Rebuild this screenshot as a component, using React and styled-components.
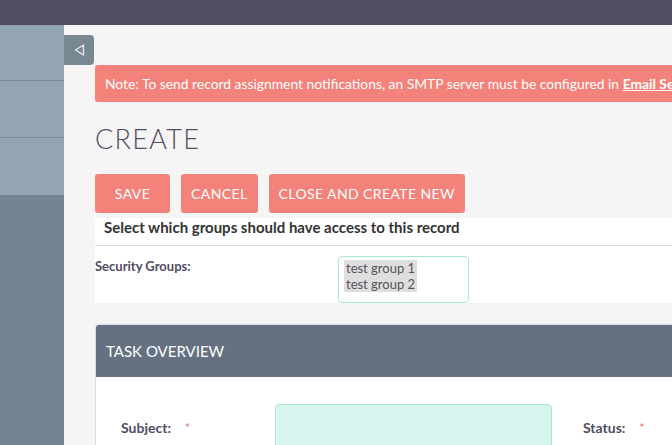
import React from "react";
import styled, { createGlobalStyle } from "styled-components";

const Global = createGlobalStyle`
  html, body { margin: 0; padding: 0; }
  * { box-sizing: border-box; }
  body {
    width: 672px;
    height: 445px;
    overflow: hidden;
    background: #f5f5f5;
    font-family: Lato, "Open Sans", sans-serif;
  }
`;

const TopBar = styled.div`
  height: 25px;
  background: #534d64;
`;

const Layout = styled.div`
  display: flex;
  height: 420px;
`;

const Sidebar = styled.div`
  width: 64px;
  flex-shrink: 0;
  display: flex;
  flex-direction: column;
  background: #748490;
`;

const SideNav = styled.div`
  background: #93a4b2;
  display: flex;
  flex-direction: column;
`;

const SideItem = styled.div`
  height: ${(p) => p.h}px;
  border-bottom: ${(p) => (p.last ? "none" : "1px solid #7a8a97")};
`;

const Main = styled.div`
  position: relative;
  flex: 1;
  overflow: hidden;
  padding: 40px 0 0 31px;
`;

const Toggle = styled.div`
  position: absolute;
  left: 0;
  top: 10px;
  width: 30px;
  height: 30px;
  background: #788893;
  border-radius: 0 4px 4px 0;
  display: flex;
  align-items: center;
  justify-content: center;
`;

const Content = styled.div`
  width: 1000px;
`;

const Banner = styled.div`
  height: 37px;
  background: #f3827a;
  border-radius: 3px;
  color: #fff;
  font-size: 13.85px;
  display: flex;
  align-items: center;
  padding-left: 10px;
  white-space: pre;

  a {
    color: #fff;
    font-weight: 700;
    text-decoration: underline;
  }
`;

const Title = styled.h1`
  margin: 22px 0 0;
  font-size: 27px;
  line-height: 30px;
  font-weight: 300;
  letter-spacing: 1.3px;
  color: #534d64;
`;

const Actions = styled.div`
  display: flex;
  gap: 11px;
  margin-top: 20px;
`;

const Button = styled.button`
  height: 39px;
  min-width: 75px;
  padding: 0 10px;
  border: none;
  border-radius: 3px;
  background: #f3827a;
  color: #fff;
  font-family: Lato, sans-serif;
  font-size: 14px;
  letter-spacing: 0.4px;
  text-transform: uppercase;
`;

const GroupsPanel = styled.div`
  margin-top: 5px;
  width: 577px;
  background: #fff;
`;

const GroupsHeading = styled.div`
  height: 28px;
  border-bottom: 1px solid #dcdcdc;
  padding-left: 9px;
  font-size: 15px;
  font-weight: 700;
  color: #333;
  line-height: 18px;
`;

const GroupsRow = styled.div`
  display: flex;
  padding-top: 10px;
`;

const FieldLabel = styled.div`
  width: 243px;
  font-size: 13px;
  font-weight: 700;
  color: #534d64;
  padding-top: 2px;
`;

const MultiSelect = styled.div`
  width: 131px;
  height: 47px;
  border: 1px solid #a8e5d5;
  border-radius: 4px;
  padding: 3px 0 0 5px;
  display: flex;
  flex-direction: column;
  align-items: flex-start;
`;

const Option = styled.span`
  background: #dedede;
  color: #555;
  font-size: 13px;
  line-height: 16px;
  padding: 0 2px;
`;

const Panel = styled.div`
  margin-top: 21px;
  border: 1px solid #dcdcdc;
  border-radius: 4px 0 0 0;
  background: #fff;
  overflow: hidden;
`;

const PanelHeader = styled.div`
  height: 52px;
  background: #657180;
  color: #fff;
  font-size: 15px;
  display: flex;
  align-items: center;
  padding-left: 10px;
`;

const PanelBody = styled.div`
  display: flex;
  align-items: flex-start;
  padding: 27px 0 0 25px;
`;

const RowLabel = styled.div`
  display: flex;
  width: ${(p) => p.w}px;
  font-size: 14px;
  font-weight: 700;
  color: #534d64;
  line-height: 17px;
  padding-top: 15px;
`;

const Star = styled.span`
  color: #f3827a;
  font-size: 11px;
  margin-left: ${(p) => p.gap}px;
`;

const TextInput = styled.div`
  width: 277px;
  height: 50px;
  background: #d5f5ee;
  border: 1px solid #a8e5d5;
  border-radius: 4px;
  margin-right: 31px;
`;

const BackIcon = () => (
  <svg width="11" height="12" viewBox="0 0 11 12">
    <polygon points="9.5,1 9.5,11 1.5,6" fill="none" stroke="#e6eaee" strokeWidth="1.3" strokeLinejoin="round" />
  </svg>
);

export default function App() {
  return (
    <>
      <Global />
      <TopBar />
      <Layout>
        <Sidebar>
          <SideNav>
            <SideItem h={56} />
            <SideItem h={57} />
            <SideItem h={57} last />
          </SideNav>
        </Sidebar>
        <Main>
          <Toggle>
            <BackIcon />
          </Toggle>
          <Content>
            <Banner>
              {"Note: To send record assignment notifications, an SMTP server must be configured in "}
              <a>Email Settings</a>.
            </Banner>
            <Title>CREATE</Title>
            <Actions>
              <Button>Save</Button>
              <Button>Cancel</Button>
              <Button>Close and create new</Button>
            </Actions>
            <GroupsPanel>
              <GroupsHeading>Select which groups should have access to this record</GroupsHeading>
              <GroupsRow>
                <FieldLabel>Security Groups:</FieldLabel>
                <MultiSelect>
                  <Option>test group 1</Option>
                  <Option>test group 2</Option>
                </MultiSelect>
              </GroupsRow>
            </GroupsPanel>
            <Panel>
              <PanelHeader>TASK OVERVIEW</PanelHeader>
              <PanelBody>
                <RowLabel w={154}>
                  Subject:<Star gap={14}>*</Star>
                </RowLabel>
                <TextInput />
                <RowLabel w={120}>
                  Status:<Star gap={14}>*</Star>
                </RowLabel>
              </PanelBody>
            </Panel>
          </Content>
        </Main>
      </Layout>
    </>
  );
}
